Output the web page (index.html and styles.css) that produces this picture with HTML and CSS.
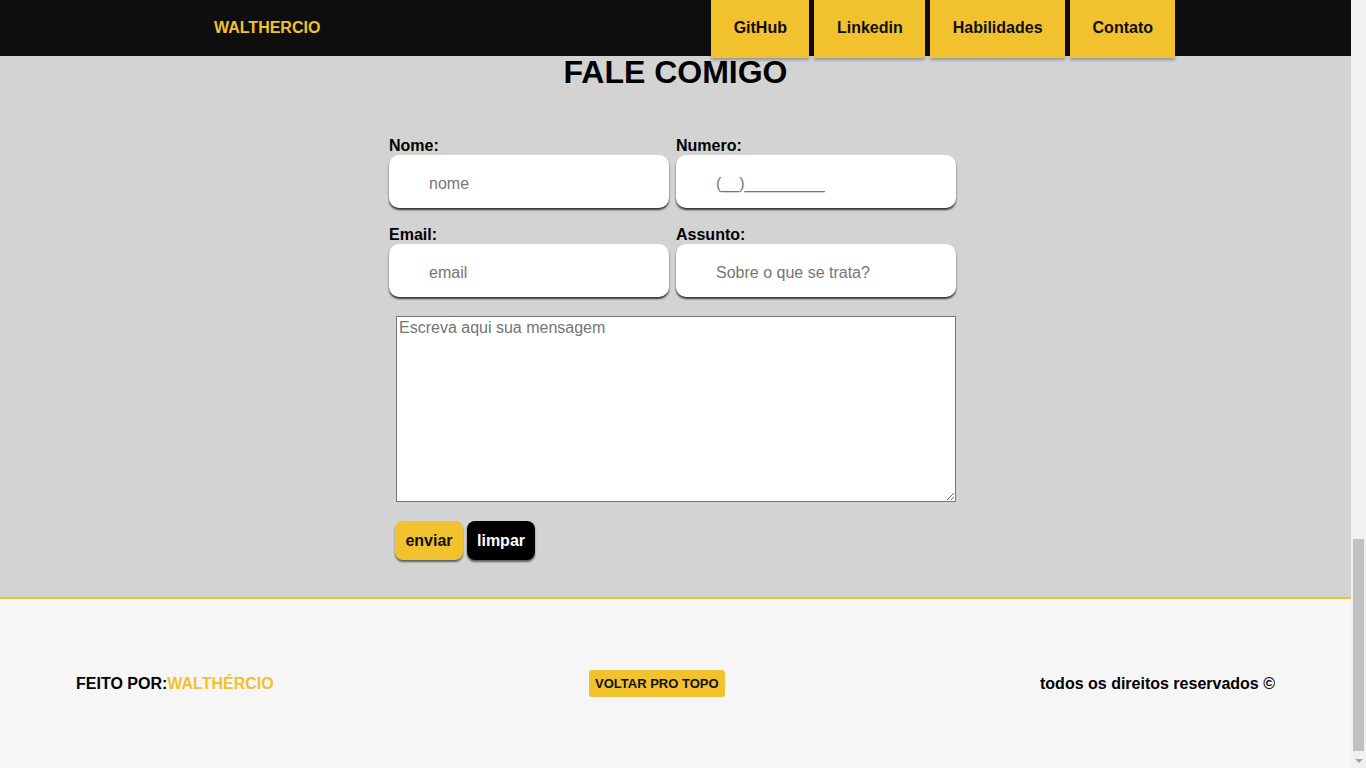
FILE: index.html
```html
<!DOCTYPE html>
<html lang="pt-BR">
<head>
<meta charset="utf-8">
<title>Fale comigo</title>
<link rel="stylesheet" href="styles.css">
</head>
<body>
<header class="topbar">
  <a class="logo" href="#">WALTHERCIO</a>
  <nav class="nav">
    <a class="nav-item" href="#">GitHub</a>
    <a class="nav-item" href="#">Linkedin</a>
    <a class="nav-item" href="#">Habilidades</a>
    <a class="nav-item" href="#">Contato</a>
  </nav>
</header>

<main class="contact">
  <h1 class="contact-title">FALE COMIGO</h1>
  <form class="contact-form">
    <div class="fields">
      <div class="field">
        <label class="field-label" for="nome">Nome:</label>
        <input class="field-input" id="nome" type="text" placeholder="nome">
      </div>
      <div class="field">
        <label class="field-label" for="numero">Numero:</label>
        <input class="field-input" id="numero" type="text" placeholder="(__)_________">
      </div>
      <div class="field">
        <label class="field-label" for="email">Email:</label>
        <input class="field-input" id="email" type="text" placeholder="email">
      </div>
      <div class="field">
        <label class="field-label" for="assunto">Assunto:</label>
        <input class="field-input" id="assunto" type="text" placeholder="Sobre o que se trata?">
      </div>
    </div>
    <textarea class="message" placeholder="Escreva aqui sua mensagem"></textarea>
    <div class="actions">
      <button class="btn btn-send" type="button">enviar</button>
      <button class="btn btn-clear" type="reset">limpar</button>
    </div>
  </form>
</main>

<footer class="footer">
  <p class="footer-credit">FEITO POR:<span class="footer-name">WALTHÉRCIO</span></p>
  <a class="to-top" href="#">VOLTAR PRO TOPO</a>
  <p class="footer-rights">todos os direitos reservados ©</p>
</footer>

<div class="scrollbar" aria-hidden="true">
  <div class="scrollbar-thumb"></div>
  <div class="scrollbar-arrow"></div>
</div>
</body>
</html>
```

FILE: styles.css
```css
body {
  margin: 0 15px 0 0;
  padding-top: 56px;
  font-family: "Liberation Sans", Arial, sans-serif;
  color: #000;
  background: #f6f6f6;
}

.topbar {
  position: fixed;
  top: 0;
  left: 0;
  right: 15px;
  height: 56px;
  background: #0e0e0e;
  display: flex;
  justify-content: space-between;
  align-items: flex-start;
  padding: 0 176px 0 214px;
  z-index: 10;
}

.logo {
  color: #f2c12e;
  font-weight: bold;
  font-size: 16px;
  line-height: 56px;
  text-decoration: none;
}

.nav {
  display: flex;
  gap: 5px;
}

.nav-item {
  display: block;
  height: 58px;
  line-height: 55px;
  padding: 0 22px 0 23px;
  background: #f2c12e;
  color: #0e0e0e;
  font-weight: bold;
  font-size: 16px;
  text-decoration: none;
  box-shadow: 0 2px 3px rgba(0, 0, 0, 0.3);
}

.contact {
  background: #d3d3d3;
  padding-bottom: 37px;
  border-bottom: 2px solid #f2c12e;
}

.contact-title {
  margin: 0;
  text-align: center;
  font-size: 32px;
  line-height: 33px;
  font-weight: bold;
}

.contact-form {
  width: 573px;
  margin: 48px auto 0;
}

.fields {
  display: grid;
  grid-template-columns: 280px 280px;
  column-gap: 7px;
  row-gap: 18px;
}

.field {
  display: flex;
  flex-direction: column;
}

.field-label {
  font-weight: bold;
  font-size: 16px;
  line-height: 18px;
}

.field-input {
  box-sizing: border-box;
  height: 53px;
  width: 280px;
  border: none;
  border-radius: 10px;
  background: #fff;
  padding: 4px 0 0 40px;
  font-family: "Liberation Sans", Arial, sans-serif;
  font-size: 16px;
  box-shadow: 0 2px 2px rgba(0, 0, 0, 0.75);
  outline: none;
}

.field-input::placeholder {
  color: #757575;
}

.message {
  display: block;
  box-sizing: border-box;
  width: 560px;
  height: 186px;
  margin: 19px 0 0 7px;
  padding: 2px;
  border: 1px solid #767676;
  font-family: "Liberation Sans", Arial, sans-serif;
  font-size: 16px;
  background: #fff;
}

.message::placeholder {
  color: #757575;
}

.actions {
  display: flex;
  gap: 4px;
  margin: 19px 0 0 6px;
}

.btn {
  height: 39px;
  width: 68px;
  border: none;
  border-radius: 8px;
  font-family: "Liberation Sans", Arial, sans-serif;
  font-weight: bold;
  font-size: 16px;
  padding: 0;
  box-shadow: 0 2px 2px rgba(0, 0, 0, 0.55);
  cursor: pointer;
}

.btn-send {
  background: #f2c12e;
  color: #111;
}

.btn-clear {
  background: #000;
  color: #fff;
}

.footer {
  height: 169px;
  box-sizing: border-box;
  background: #f6f6f6;
  display: flex;
  justify-content: space-between;
  align-items: center;
  padding: 0 76px;
}

.footer-credit,
.footer-rights {
  margin: 0;
  font-weight: bold;
  font-size: 16px;
}

.footer-name {
  color: #f2c12e;
}

.to-top {
  display: block;
  background: #f2c12e;
  color: #111;
  font-size: 13px;
  font-weight: bold;
  text-decoration: none;
  padding: 0 6px;
  height: 27px;
  line-height: 27px;
  border-radius: 3px;
}

.scrollbar {
  position: fixed;
  top: 0;
  right: 0;
  bottom: 0;
  width: 15px;
  background: #f1f1f1;
  z-index: 20;
}

.scrollbar-thumb {
  position: absolute;
  left: 2px;
  right: 2px;
  top: 539px;
  bottom: 17px;
  background: #c1c1c1;
}

.scrollbar-arrow {
  position: absolute;
  left: 4px;
  bottom: 5px;
  width: 0;
  height: 0;
  border-left: 4px solid transparent;
  border-right: 4px solid transparent;
  border-top: 4px solid #a3a3a3;
}
```
